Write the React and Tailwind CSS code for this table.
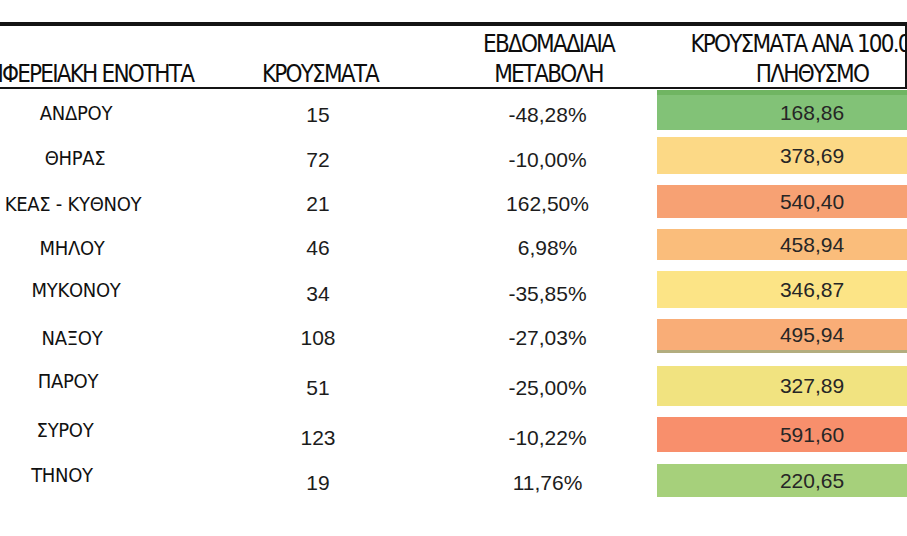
const narrow = { fontFamily: '"Liberation Sans Narrow", "Arial Narrow", "DejaVu Sans Condensed", "Liberation Sans", sans-serif' };

const rows = [
  { name: 'ΑΝΔΡΟΥ', n: '15', p: '-48,28%', v: '168,86', row: 'h-[46px]', cell: 'mt-[1px] h-[40px] bg-[#82c277] border-t-[5px] border-[#70b562]', name2: 'pt-[12px] pl-[2px]', num: 'pt-[14px]' },
  { name: 'ΘΗΡΑΣ', n: '72', p: '-10,00%', v: '378,69', row: 'h-[48px]', cell: 'mt-[2px] h-[37px] bg-[#fcd986]', name2: 'pt-[11px]', num: 'pt-[13px]' },
  { name: 'ΚΕΑΣ - ΚΥΘΝΟΥ', n: '21', p: '162,50%', v: '540,40', row: 'h-[44px]', cell: 'mt-[2px] h-[33px] bg-[#f7a173]', name2: 'pt-[9px] pr-[4px]', num: 'pt-[9px]' },
  { name: 'ΜΗΛΟΥ', n: '46', p: '6,98%', v: '458,94', row: 'h-[42px]', cell: 'mt-[2px] h-[31px] bg-[#fabd7b]', name2: 'pt-[9px] pr-[6px]', num: 'pt-[9px]' },
  { name: 'ΜΥΚΟΝΟΥ', n: '34', p: '-35,85%', v: '346,87', row: 'h-[48px]', cell: 'mt-[2px] h-[37px] bg-[#fce486]', name2: 'pt-[9px] pl-[2px]', num: 'pt-[13px]' },
  { name: 'ΝΑΞΟΥ', n: '108', p: '-27,03%', v: '495,94', row: 'h-[47px]', cell: 'mt-[2px] h-[34px] bg-[#f9ad77] border-b-[3px] border-[#b2ad7f]', name2: 'pt-[9px] pr-[6px]', num: 'pt-[9px]' },
  { name: 'ΠΑΡΟΥ', n: '51', p: '-25,00%', v: '327,89', row: 'h-[51px]', cell: 'mt-[2px] h-[40px] bg-[#f1e380]', name2: 'pt-[5px] pr-[14px]', num: 'pt-[12px]' },
  { name: 'ΣΥΡΟΥ', n: '123', p: '-10,22%', v: '591,60', row: 'h-[47px]', cell: 'mt-[2px] h-[35px] bg-[#f88f6c]', name2: 'pt-[3px] pr-[20px]', num: 'pt-[11px]' },
  { name: 'ΤΗΝΟΥ', n: '19', p: '11,76%', v: '220,65', row: 'h-[40px]', cell: 'mt-[2px] h-[33px] bg-[#a6d07b]', name2: 'pt-[1px] pr-[26px]', num: 'pt-[9px]' },
];

export default function App() {
  return (
    <div className="w-[907px] h-[536px] overflow-hidden bg-white text-[#1c1c1c]" style={{ fontFamily: '"Liberation Sans", Arial, sans-serif' }}>
      {/* header box */}
      <div className="mt-[22px] w-[907px] h-[67px] border-t-[4px] border-b-[2px] border-r-[2px] border-[#141414] overflow-hidden">
        <div className="-ml-[40px] w-[1007px] h-[61px] flex items-end text-[24px] leading-[30px] tracking-[-1.8px] text-[#0d0d0d]" style={narrow}>
          <div className="w-[230px] text-right -mb-[2px] pr-[5px] whitespace-nowrap">ΠΕΡΙΦΕΡΕΙΑΚΗ ΕΝΟΤΗΤΑ</div>
          <div className="w-[256px] text-center -mb-[2px] pl-[4px]">ΚΡΟΥΣΜΑΤΑ</div>
          <div className="w-[211px] text-center -mb-[2px] pr-[6px]">
            <div>ΕΒΔΟΜΑΔΙΑΙΑ</div>
            <div>ΜΕΤΑΒΟΛΗ</div>
          </div>
          <div className="w-[310px] text-center -mb-[2px] whitespace-nowrap">
            <div>ΚΡΟΥΣΜΑΤΑ ΑΝΑ 100.000</div>
            <div>ΠΛΗΘΥΣΜΟ</div>
          </div>
        </div>
      </div>

      {/* body rows */}
      <div className="-ml-[40px] w-[1007px]">
        {rows.map((r) => (
          <div key={r.name} className={`flex items-start ${r.row}`}>
            <div className={`w-[230px] text-center text-[20px] leading-[24px] tracking-[-0.3px] text-[#111] ${r.name2}`} style={narrow}>
              {r.name}
            </div>
            <div className={`w-[256px] text-center text-[21px] leading-[24px] ${r.num}`}>{r.n}</div>
            <div className={`w-[211px] text-center text-[21px] leading-[24px] pr-[8px] ${r.num}`}>{r.p}</div>
            <div className={`w-[310px] flex items-center justify-center text-[21px] leading-[24px] text-[#262626] ${r.cell}`}>
              {r.v}
            </div>
          </div>
        ))}
      </div>
    </div>
  );
}
